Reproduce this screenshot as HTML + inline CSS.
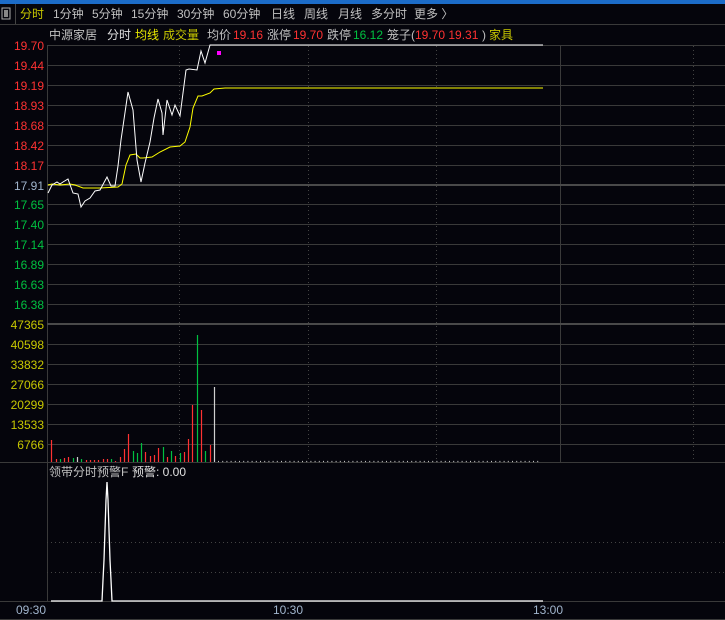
<!DOCTYPE html>
<html><head><meta charset="utf-8"><style>
html,body{margin:0;padding:0;background:#05050c;width:725px;height:620px;overflow:hidden}
svg{display:block}
text{font-family:"Liberation Sans","Noto Sans CJK SC",sans-serif;font-size:12px}
</style></head><body>
<svg width="725" height="620" xmlns="http://www.w3.org/2000/svg">
<rect width="725" height="620" fill="#05050c"/>
<rect width="725" height="4" fill="#1c6cc8"/>
<!-- tab bar -->
<rect x="2" y="8" width="8" height="11" fill="none" stroke="#aaa" stroke-width="1"/>
<rect x="4" y="10" width="4" height="7" fill="#888"/>
<line x1="15.5" y1="4" x2="15.5" y2="24" stroke="#444"/>
<line x1="0" y1="24.5" x2="725" y2="24.5" stroke="#3a3a3a"/>
<text x="20" y="18" fill="#c8c800">分时</text>
<g fill="#c0c0c0">
<text x="53" y="18">1分钟</text>
<text x="92" y="18">5分钟</text>
<text x="131" y="18">15分钟</text>
<text x="177" y="18">30分钟</text>
<text x="223" y="18">60分钟</text>
<text x="271" y="18">日线</text>
<text x="304" y="18">周线</text>
<text x="338" y="18">月线</text>
<text x="371" y="18">多分时</text>
<text x="414" y="18">更多 〉</text>
</g>
<!-- header -->
<text x="49" y="39" fill="#c0c0c0">中源家居</text>
<text x="107" y="39" fill="#e0e0e0">分时</text>
<text x="135" y="39" fill="#e8e800">均线</text>
<text x="163" y="39" fill="#c8c800">成交量</text>
<text x="207" y="39" fill="#c0c0c0">均价</text>
<text x="233" y="39" fill="#ff3232">19.16</text>
<text x="267" y="39" fill="#c0c0c0">涨停</text>
<text x="293" y="39" fill="#ff3232">19.70</text>
<text x="327" y="39" fill="#c0c0c0">跌停</text>
<text x="353" y="39" fill="#00c040">16.12</text>
<text x="387" y="39" fill="#c0c0c0">笼子(</text>
<text x="415" y="39" fill="#ff3232">19.70 19.31</text>
<text x="482" y="39" fill="#c0c0c0">)</text>
<text x="489" y="39" fill="#c8c800">家具</text>
<!-- grid -->
<g stroke="#3a3a3a" stroke-width="1">
<line x1="47" y1="45.5" x2="725" y2="45.5"/>
<line x1="47" y1="65.5" x2="725" y2="65.5"/>
<line x1="47" y1="85.5" x2="725" y2="85.5"/>
<line x1="47" y1="105.5" x2="725" y2="105.5"/>
<line x1="47" y1="125.5" x2="725" y2="125.5"/>
<line x1="47" y1="145.5" x2="725" y2="145.5"/>
<line x1="47" y1="165.5" x2="725" y2="165.5"/>
<line x1="47" y1="204.5" x2="725" y2="204.5"/>
<line x1="47" y1="224.5" x2="725" y2="224.5"/>
<line x1="47" y1="244.5" x2="725" y2="244.5"/>
<line x1="47" y1="264.5" x2="725" y2="264.5"/>
<line x1="47" y1="284.5" x2="725" y2="284.5"/>
<line x1="47" y1="304.5" x2="725" y2="304.5"/>
<line x1="47" y1="344.5" x2="725" y2="344.5"/>
<line x1="47" y1="364.5" x2="725" y2="364.5"/>
<line x1="47" y1="384.5" x2="725" y2="384.5"/>
<line x1="47" y1="404.5" x2="725" y2="404.5"/>
<line x1="47" y1="424.5" x2="725" y2="424.5"/>
<line x1="47" y1="444.5" x2="725" y2="444.5"/>
<line x1="0" y1="462.5" x2="725" y2="462.5"/>
<line x1="0" y1="601.5" x2="725" y2="601.5"/>
<line x1="0" y1="619.5" x2="725" y2="619.5"/>
<line x1="47.5" y1="45" x2="47.5" y2="602"/>
<line x1="560.5" y1="45" x2="560.5" y2="462"/>
</g>
<line x1="47" y1="185" x2="725" y2="185" stroke="#4a4a4a" stroke-width="2"/>
<line x1="47" y1="324" x2="725" y2="324" stroke="#4a4a4a" stroke-width="2"/>
<g stroke="#444" stroke-dasharray="1 3">
<line x1="179.5" y1="46" x2="179.5" y2="462"/>
<line x1="308.5" y1="46" x2="308.5" y2="462"/>
<line x1="436.5" y1="46" x2="436.5" y2="462"/>
<line x1="693.5" y1="46" x2="693.5" y2="462"/>
<line x1="47" y1="542.5" x2="725" y2="542.5"/>
<line x1="47" y1="572.5" x2="725" y2="572.5"/>
</g>
<!-- price axis -->
<g text-anchor="end">
<text x="44" y="50" fill="#ff3232">19.70</text>
<text x="44" y="70" fill="#ff3232">19.44</text>
<text x="44" y="90" fill="#ff3232">19.19</text>
<text x="44" y="110" fill="#ff3232">18.93</text>
<text x="44" y="130" fill="#ff3232">18.68</text>
<text x="44" y="150" fill="#ff3232">18.42</text>
<text x="44" y="170" fill="#ff3232">18.17</text>
<text x="44" y="190" fill="#a0b4cc">17.91</text>
<text x="44" y="209" fill="#00c040">17.65</text>
<text x="44" y="229" fill="#00c040">17.40</text>
<text x="44" y="249" fill="#00c040">17.14</text>
<text x="44" y="269" fill="#00c040">16.89</text>
<text x="44" y="289" fill="#00c040">16.63</text>
<text x="44" y="309" fill="#00c040">16.38</text>
<text x="44" y="329" fill="#c8c800">47365</text>
<text x="44" y="349" fill="#c8c800">40598</text>
<text x="44" y="369" fill="#c8c800">33832</text>
<text x="44" y="389" fill="#c8c800">27066</text>
<text x="44" y="409" fill="#c8c800">20299</text>
<text x="44" y="429" fill="#c8c800">13533</text>
<text x="44" y="449" fill="#c8c800">6766</text>
</g>
<!-- price lines -->
<polyline fill="none" stroke="#ffff00" stroke-width="1" points="48,185 52,184 60,185 70,184 75,185 83,188 100,188 118,187 122,184 126,165 130,155 136,154 140,158 143,158 152,157 160,152 170,147 180,146 185,142 190,127 193,108 198,96 202,96 210,93 214,89 225,88 543,88"/>
<polyline fill="none" stroke="#ffffff" stroke-width="1" points="48,193 52,185 57,182 60,184 63,182 68,179 73,193 78,194 81,207 85,201 90,198 95,191 100,190 107,177 111,186 115,186 118,166 121,140 128,92 133,110 137,160 141,182 145,163 150,142 154,118 158,99 162,113 163,135 167,100 172,115 175,105 180,116 186,70 189,69 197,70 201,51 205,63 210,45 543,45"/>
<rect x="217" y="51" width="4" height="4" fill="#ff00ff"/>
<!-- volume -->
<g stroke-width="1.2">
<path stroke="#ff3232" d="M51.5 440V462M56.5 459V462M64.5 458V462M68.5 457V462M86.5 460V462M90.5 460V462M94.5 460V462M98.5 460V462M103.5 459V462M107.5 459V462M115.5 461V462M120.5 457V462M124.5 449V462M128.5 434V462M145.5 452V462M150.5 456V462M154.5 455V462M158.5 448V462M167.5 457V462M175.5 456V462M184.5 452V462M188.5 439V462M192.5 405V462M201.5 410V462M210.5 445V462"/>
<path stroke="#00c040" d="M60.5 459V462M73.5 458V462M81.5 459V462M111.5 459V462M133.5 451V462M137.5 453V462M141.5 443V462M163.5 447V462M171.5 451V462M180.5 453V462M197.5 335V462M205.5 451V462"/>
<path stroke="#d0d0d0" d="M77.5 457V462M214.5 387V462"/>
<line x1="218" y1="461.5" x2="541" y2="461.5" stroke="#c0c0c0" stroke-dasharray="1 3.2"/>
</g>
<!-- indicator -->
<text x="49" y="476" fill="#c0c0c0">领带分时预警F</text>
<text x="132" y="476" fill="#e0e0e0">预警: 0.00</text>
<polyline fill="none" stroke="#ffffff" stroke-width="1.3" points="51,601 102,601 103,580 104,560 105,530 106,500 107,482 108,500 109,530 110,560 111,580 112,601 543,601"/>
<!-- time -->
<text x="16" y="614" fill="#a0b4cc">09:30</text>
<text x="273" y="614" fill="#a0b4cc">10:30</text>
<text x="533" y="614" fill="#a0b4cc">13:00</text>
</svg>
</body></html>
